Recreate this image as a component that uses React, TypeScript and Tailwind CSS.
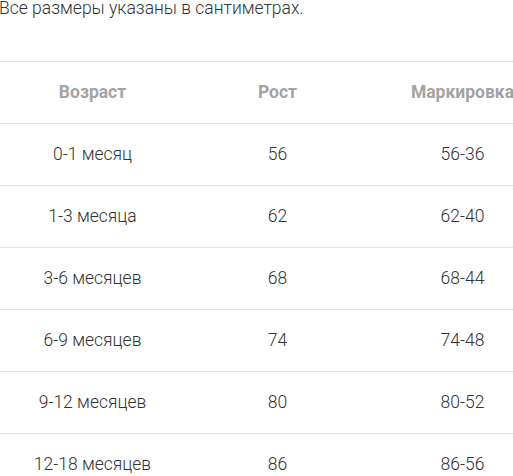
const ROWS = [
  ['0-1 месяц', '56', '56-36'],
  ['1-3 месяца', '62', '62-40'],
  ['3-6 месяцев', '68', '68-44'],
  ['6-9 месяцев', '74', '74-48'],
  ['9-12 месяцев', '80', '80-52'],
  ['12-18 месяцев', '86', '86-56'],
]

export default function App() {
  return (
    <div
      className="w-[513px] h-[476px] overflow-hidden bg-white text-[#333]"
      style={{ fontFamily: 'Roboto, "Noto Sans", sans-serif' }}
    >
      <p className="text-[17.5px] leading-[16px] font-light -ml-px">Все размеры указаны в сантиметрах.</p>

      <table className="mt-[45px] w-[555px] border-collapse table-fixed">
        <thead>
          <tr className="border-t border-b border-[#e2e2e2] h-[62px]">
            <th className="text-[17.5px] font-bold text-[#a3a3a3] text-center">Возраст</th>
            <th className="text-[17.5px] font-bold text-[#a3a3a3] text-center">Рост</th>
            <th className="text-[17.5px] font-bold text-[#a3a3a3] text-center">Маркировка</th>
          </tr>
        </thead>
        <tbody>
          {ROWS.map((r) => (
            <tr key={r[0]} className="border-b border-[#e2e2e2] h-[62px]">
              {r.map((c, i) => (
                <td key={i} className="text-[17.5px] font-light text-center">
                  {c}
                </td>
              ))}
            </tr>
          ))}
        </tbody>
      </table>
    </div>
  )
}
